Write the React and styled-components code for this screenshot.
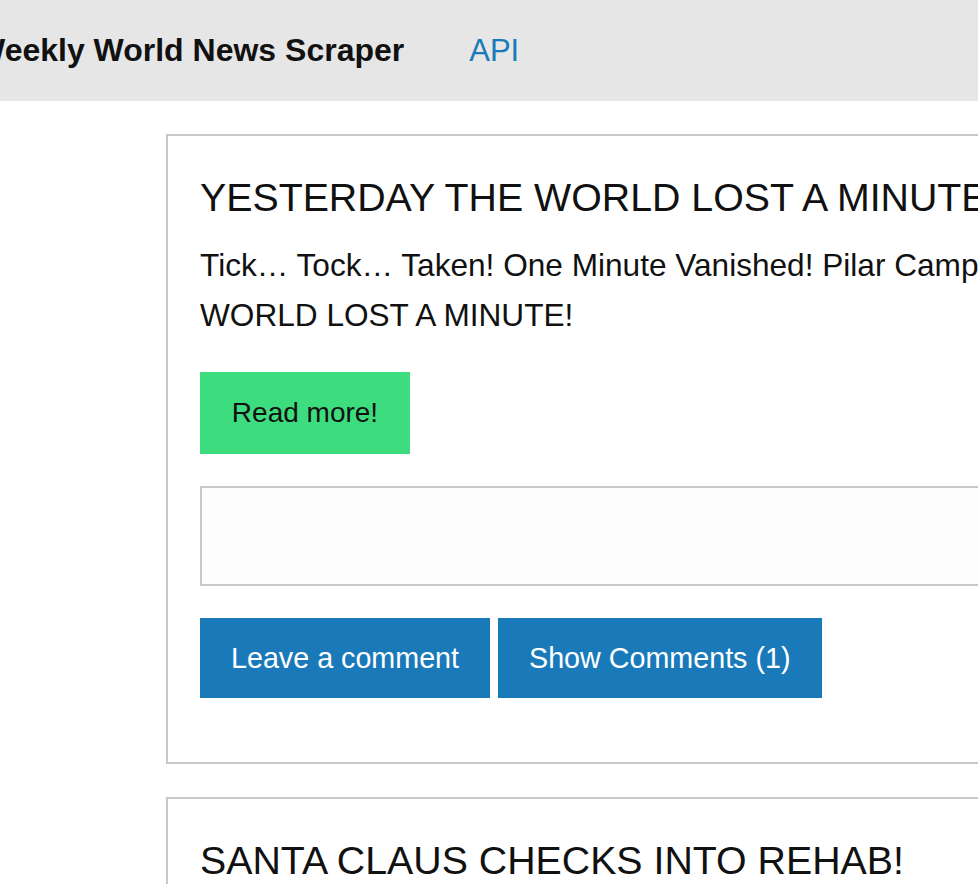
import styled, { createGlobalStyle } from "styled-components";

const GlobalStyle = createGlobalStyle`
  html, body {
    margin: 0;
    padding: 0;
    background: #ffffff;
    overflow: hidden;
  }
  body {
    font-family: "Liberation Sans", Arial, Helvetica, sans-serif;
    color: #111;
  }
`;

const articles = [
  {
    title: "YESTERDAY THE WORLD LOST A MINUTE!",
    summary:
      "Tick… Tock… Taken! One Minute Vanished! Pilar Campos Says YESTERDAY THE WORLD LOST A MINUTE!",
    comments: 1,
  },
  {
    title: "SANTA CLAUS CHECKS INTO REHAB!",
    summary: "Jolly old elf seeks help after a rough holiday season.",
    comments: 0,
  },
];

export default function App() {
  return (
    <Page>
      <GlobalStyle />
      <NavBar>
        <Brand>Weekly World News Scraper</Brand>
        <NavLink href="#">API</NavLink>
      </NavBar>

      <Feed>
        {articles.map((a) => (
          <Card key={a.title}>
            <Title>{a.title}</Title>
            <Summary>{a.summary}</Summary>
            <ReadMore>Read more!</ReadMore>
            <CommentBox />
            <Actions>
              <BlueButton>Leave a comment</BlueButton>
              <BlueButton>Show Comments ({a.comments})</BlueButton>
            </Actions>
          </Card>
        ))}
      </Feed>
    </Page>
  );
}

const Page = styled.div`
  width: 978px;
  height: 884px;
  overflow: hidden;
`;

const NavBar = styled.nav`
  height: 101px;
  background-color: #e6e6e6;
  display: flex;
  align-items: center;
  gap: 65px;
  white-space: nowrap;
`;

const Brand = styled.span`
  font-size: 32px;
  font-weight: bold;
  color: #111;
  margin-left: -25px;
`;

const NavLink = styled.a`
  font-size: 31px;
  color: #1a7ab9;
  text-decoration: none;
`;

const Feed = styled.main`
  padding: 33px 0 0 166px;
  display: flex;
  flex-direction: column;
  gap: 33px;
`;

const Card = styled.article`
  width: 1240px;
  border: 2px solid #c8c8c8;
  padding: 38px 32px 64px 32px;
  display: flex;
  flex-direction: column;
  align-items: flex-start;
`;

const Title = styled.h2`
  margin: 0;
  font-size: 39.3px;
  font-weight: normal;
  line-height: 46px;
  white-space: nowrap;
`;

const Summary = styled.p`
  margin: 20px 0 0;
  font-size: 31.6px;
  line-height: 50px;
`;

const ReadMore = styled.button`
  margin-top: 32px;
  width: 210px;
  height: 82px;
  border: none;
  border-radius: 0;
  background-color: #3ddc7f;
  color: #111;
  font-family: inherit;
  font-size: 28px;
`;

const CommentBox = styled.textarea`
  margin-top: 32px;
  width: 100%;
  height: 100px;
  box-sizing: border-box;
  border: 2px solid #c8c8c8;
  background: #fdfdfd;
  resize: none;
`;

const Actions = styled.div`
  margin-top: 32px;
  display: flex;
  gap: 8px;
`;

const BlueButton = styled.button`
  height: 80px;
  padding: 0 31px;
  border: none;
  border-radius: 0;
  background-color: #1a7ab9;
  color: #fff;
  font-family: inherit;
  font-size: 28.7px;
`;
